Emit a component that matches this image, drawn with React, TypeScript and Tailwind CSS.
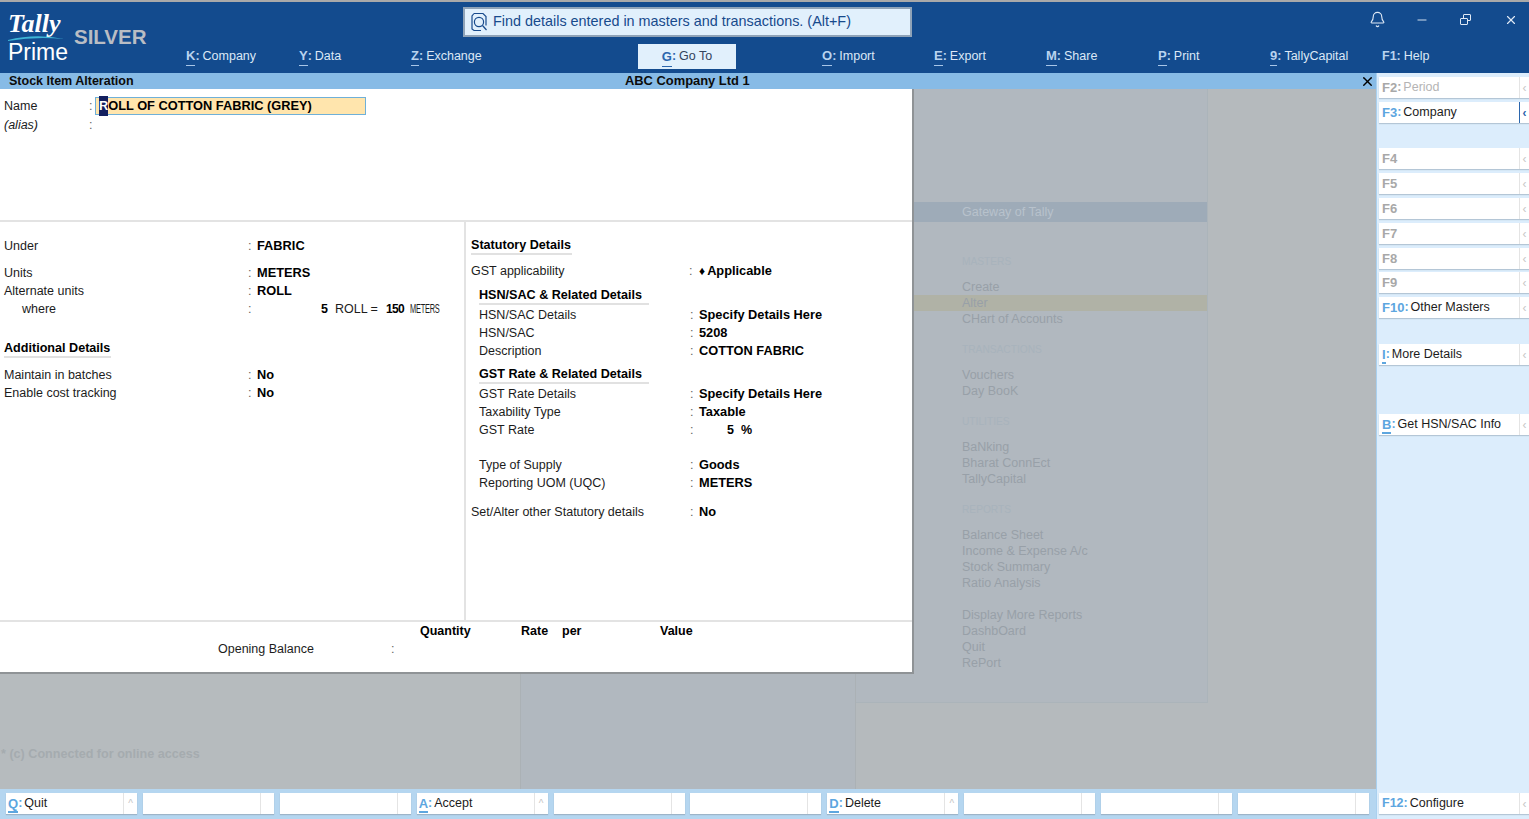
import React from 'react';
import { Bell, Minus, X } from 'lucide-react';

const sans = "font-['Liberation_Sans',Arial,sans-serif]";

const topLeft = [
  { k: 'K', label: 'Company', w: 'w-[113px]' },
  { k: 'Y', label: 'Data', w: 'w-[112px]' },
  { k: 'Z', label: 'Exchange', w: 'w-[227px]' },
];
const topRight = [
  { k: 'O', label: 'Import', w: 'w-[112px]' },
  { k: 'E', label: 'Export', w: 'w-[112px]' },
  { k: 'M', label: 'Share', w: 'w-[112px]' },
  { k: 'P', label: 'Print', w: 'w-[112px]' },
  { k: '9', label: 'TallyCapital', w: 'w-[112px]' },
];

const sideButtons = [
  { k: 'F2', label: 'Period', dim: true, top: 'mt-[4px]', active: false, under: false },
  { k: 'F3', label: 'Company', dim: false, top: 'mt-[4px]', active: true, under: false },
  { k: 'F4', label: '', dim: true, top: 'mt-[25px]', active: false, under: false },
  { k: 'F5', label: '', dim: true, top: 'mt-[4px]', active: false, under: false },
  { k: 'F6', label: '', dim: true, top: 'mt-[4px]', active: false, under: false },
  { k: 'F7', label: '', dim: true, top: 'mt-[4px]', active: false, under: false },
  { k: 'F8', label: '', dim: true, top: 'mt-[4px]', active: false, under: false },
  { k: 'F9', label: '', dim: true, top: 'mt-[3px]', active: false, under: false },
  { k: 'F10', label: 'Other Masters', dim: false, top: 'mt-[4px]', active: false, under: false },
  { k: 'I', label: 'More Details', dim: false, top: 'mt-[26px]', active: false, under: true },
  { k: 'B', label: 'Get HSN/SAC Info', dim: false, top: 'mt-[49px]', active: false, under: true },
];

const bottomButtons = [
  { k: 'Q', label: 'Quit' },
  { k: '', label: '' },
  { k: '', label: '' },
  { k: 'A', label: 'Accept' },
  { k: '', label: '' },
  { k: '', label: '' },
  { k: 'D', label: 'Delete' },
  { k: '', label: '' },
  { k: '', label: '' },
  { k: '', label: '' },
];

const ghostMenu = [
  { t: 'MASTERS', head: true, mt: 'mt-[32px]' },
  { t: 'Create', mt: 'mt-[9px]' },
  { t: 'Alter', hl: true },
  { t: 'CHart of Accounts' },
  { t: 'TRANSACTIONS', head: true, mt: 'mt-[15px]' },
  { t: 'Vouchers', mt: 'mt-[9px]' },
  { t: 'Day BooK' },
  { t: 'UTILITIES', head: true, mt: 'mt-[15px]' },
  { t: 'BaNking', mt: 'mt-[9px]' },
  { t: 'Bharat ConnEct' },
  { t: 'TallyCapital' },
  { t: 'REPORTS', head: true, mt: 'mt-[15px]' },
  { t: 'Balance Sheet', mt: 'mt-[9px]' },
  { t: 'Income & Expense A/c' },
  { t: 'Stock Summary' },
  { t: 'Ratio Analysis' },
  { t: 'Display More Reports', mt: 'mt-[16px]' },
  { t: 'DashbOard' },
  { t: 'Quit' },
  { t: 'RePort' },
];

const Row = ({ label, value, labelW, children }: { label: string; value?: string; labelW: string; children?: React.ReactNode }) => (
  <div className="flex h-[18px] items-center text-[12.5px] whitespace-nowrap text-[#1c1c1c]">
    <span className={`${labelW} shrink-0`}>{label}</span>
    <span className="w-[9px] shrink-0 text-[#666]">:</span>
    {value && <span className="text-[12.8px] font-bold text-black">{value}</span>}
    {children}
  </div>
);

const Heading = ({ text, w, mt = '' }: { text: string; w: string; mt?: string }) => (
  <div className={`${w} ${mt} h-[18px] border-b-2 border-[#e1e1e1] text-[12.6px] leading-[17px] font-bold whitespace-nowrap text-black`}>{text}</div>
);

const App = () => {
  return (
    <div className={`${sans} flex h-[819px] w-[1529px] flex-col overflow-hidden bg-[#b5babd]`}>
      <div className="h-[2px] bg-[#a9a9a9]" />

      {/* top bar */}
      <header className="flex h-[71px] shrink-0 bg-[#134b8e]">
        <div className="flex h-full w-[186px] shrink-0 pl-[8px]">
          <div className="w-[66px] shrink-0">
            <div className="mt-[10px] h-[24px] font-['Liberation_Serif',serif] text-[26px] leading-[24px] font-bold text-white italic">Tally</div>
            <svg width="58" height="8" viewBox="0 0 58 8" className="-mt-[2px] block">
              <path d="M0 6 Q 28 -1 56 5 Q 28 2 0 7 Z" fill="#3fb6d6" />
            </svg>
            <div className="-mt-[1px] text-[23px] leading-[22px] text-white">Prime</div>
          </div>
          <div className="mt-[23px] text-[20.5px] leading-[24px] font-bold text-[#b9bdc4]">SILVER</div>
        </div>
        <div className="flex min-w-0 flex-1 flex-col">
          <div className="flex h-[35px] items-start">
            <div className="mt-[5px] ml-[277px] flex h-[30px] w-[449px] items-center border-2 border-[#8fa3b8] bg-[#e1f0fc] pl-[5px] text-[14.4px] text-[#174a8c]">
              <span className="flex h-[20px] w-[22px] items-center">
                <svg width="18" height="20" viewBox="0 0 18 20" fill="none" stroke="#174a8c" strokeWidth="1.2">
                  <path d="M4 1.5h9l3 3v9M4 1.5 2 4v13l2 1.5h7" />
                  <circle cx="9" cy="10" r="4.6" />
                  <path d="m12.5 13.5 4 4.5" />
                </svg>
              </span>
              <span className="ml-[1px]">Find details entered in masters and transactions. (Alt+F)</span>
            </div>
            <div className="ml-auto flex h-[35px] items-center text-[#dfe9f5]">
              <Bell className="h-[17px] w-[17px]" strokeWidth={1.6} />
              <Minus className="ml-[29px] h-[14px] w-[14px]" strokeWidth={1.6} />
              <span className="relative ml-[31px] block h-[11px] w-[11px]">
                <span className="absolute top-0 right-0 h-[7px] w-[8px] rounded-[1px] border border-[#dfe9f5]" />
                <span className="absolute bottom-0 left-0 h-[7px] w-[8px] rounded-[1px] border border-[#dfe9f5] bg-[#134b8e]" />
              </span>
              <X className="mr-[11px] ml-[33px] h-[14px] w-[14px]" strokeWidth={2} />
            </div>
          </div>
          <nav className="flex h-[36px] items-start text-[12.5px] text-[#dce8f6]">
            {topLeft.map(item => (
              <div key={item.k} className={`${item.w} flex h-[32px] items-center pt-[8px]`}>
                <span className="border-b border-[#a8c6e8] pb-[2px] text-[13px] leading-[15px] font-bold text-[#b9d3ef]">{item.k}</span>
                <span className="mr-[3px] -mt-[2px] font-bold text-[#b9d3ef]">:</span>
                <span className="-mt-[2px]">{item.label}</span>
              </div>
            ))}
            <div className="mt-[7px] flex h-[25px] w-[98px] items-center justify-center bg-[#e1f0fc] text-[#33435c]">
              <span className="mt-[2px] border-b border-[#2b66ad] pb-[2px] text-[13px] leading-[15px] font-bold text-[#2b66ad]">G</span>
              <span className="mr-[3px] font-bold text-[#2b66ad]">:</span>
              Go To
            </div>
            <div className="w-[86px] shrink-0" />
            {topRight.map(item => (
              <div key={item.k} className={`${item.w} flex h-[32px] items-center pt-[8px]`}>
                <span className="border-b border-[#a8c6e8] pb-[2px] text-[13px] leading-[15px] font-bold text-[#b9d3ef]">{item.k}</span>
                <span className="mr-[3px] -mt-[2px] font-bold text-[#b9d3ef]">:</span>
                <span className="-mt-[2px]">{item.label}</span>
              </div>
            ))}
            <div className="flex h-[32px] items-center pt-[6px] whitespace-nowrap">
              <span className="font-bold text-[#b9d3ef]">F1:</span>
              <span className="ml-[3px]">Help</span>
            </div>
          </nav>
        </div>
      </header>

      <div className="flex min-h-0 flex-1">
        <div className="flex w-[1376px] shrink-0 flex-col">
          {/* title bar */}
          <div className="flex h-[16px] shrink-0 items-center bg-[#87bbe6] font-bold text-[#0b0b0b]">
            <span className="w-[625px] shrink-0 pl-[9px] text-[12.5px]">Stock Item Alteration</span>
            <span className="text-[12.9px]">ABC Company Ltd 1</span>
            <X className="mr-[1px] ml-auto h-[15px] w-[15px] text-black" strokeWidth={2.2} />
          </div>

          {/* canvas with the dimmed Gateway behind the form */}
          <div className="relative flex min-h-0 flex-1">
            <div className="flex h-[700px] w-full">
              <div className="w-[521px] shrink-0 border-r border-[#abb1b5] bg-[#b6bbbe]">
                <div className="mt-[656px] pl-[1px] text-[12.6px] font-bold text-[#a5abaf]">* (c) Connected for online access</div>
              </div>
              <div className="w-[335px] shrink-0 border-r border-[#abb1b5] bg-[#b1b8bf]" />
              <div className="h-[614px] w-[352px] shrink-0 border-r border-b border-[#abb4ba] bg-[#b1b8bf] pt-[113px]">
                <div className="flex h-[20px] items-center bg-[#9eabb8] pl-[106px] text-[12.5px] text-[#b8c2cc]">Gateway of Tally</div>
                {ghostMenu.map(item => (
                  <div
                    key={item.t}
                    className={`${item.mt ?? ''} ${item.hl ? 'bg-[#b0b2a6]' : ''} flex h-[16px] items-center pl-[106px] ${item.head ? 'text-[10.2px] text-[#a8b3bc]' : 'text-[12.5px] text-[#98a0a8]'}`}
                  >
                    {item.t}
                  </div>
                ))}
              </div>
            </div>

            {/* form sits over the dimmed screen */}
            <div className="absolute top-0 left-0 flex h-[585px] w-[914px] flex-col border-r-2 border-b-2 border-[#8f9396] bg-white">
              <div className="h-[133px] shrink-0 border-b-2 border-[#e3e3e3] pt-[8px] pl-[4px]">
                <div className="flex h-[18px] items-center text-[12.5px] text-[#1c1c1c]">
                  <span className="w-[85px] shrink-0">Name</span>
                  <span className="w-[6px] shrink-0 text-[#666]">:</span>
                  <div className="flex h-[18px] w-[271px] items-center border border-[#6fb0d8] bg-[#ffe5ad] pl-[3px] text-[12.8px] font-bold text-black">
                    <span className="bg-[#14205f] text-white">R</span>OLL OF COTTON FABRIC (GREY)
                  </div>
                </div>
                <div className="mt-[1px] flex h-[18px] items-center text-[12.5px] text-[#1c1c1c]">
                  <span className="w-[85px] shrink-0 italic">(alias)</span>
                  <span className="text-[#666]">:</span>
                </div>
              </div>

              <div className="flex min-h-0 flex-1">
                <div className="w-[466px] shrink-0 border-r-2 border-[#e3e3e3] pt-[15px] pl-[4px]">
                  <Row label="Under" value="FABRIC" labelW="w-[244px]" />
                  <div className="mt-[9px]">
                    <Row label="Units" value="METERS" labelW="w-[244px]" />
                    <Row label="Alternate units" value="ROLL" labelW="w-[244px]" />
                    <div className="flex h-[18px] items-center text-[12.5px] whitespace-nowrap text-[#1c1c1c]">
                      <span className="w-[244px] shrink-0 pl-[18px]">where</span>
                      <span className="w-[73px] shrink-0 text-[#666]">:</span>
                      <span className="font-bold text-black">5</span>
                      <span className="ml-[7px]">ROLL =</span>
                      <span className="ml-[8px] text-[12px] font-bold tracking-[-0.6px] text-black">150</span>
                      <span className="ml-[6px] inline-block origin-left scale-x-[0.62] text-[12px] tracking-[-0.4px]">METERS</span>
                    </div>
                  </div>
                  <Heading text="Additional Details" w="w-[107px]" mt="mt-[22px]" />
                  <div className="mt-[8px]">
                    <Row label="Maintain in batches" value="No" labelW="w-[244px]" />
                    <Row label="Enable cost tracking" value="No" labelW="w-[244px]" />
                  </div>
                </div>

                <div className="min-w-0 flex-1 pt-[15px] pl-[5px]">
                  <Heading text="Statutory Details" w="w-[101px]" />
                  <div className="mt-[7px]">
                    <Row label="GST applicability" labelW="w-[218px]">
                      <span className="mr-[2px] ml-[1px] text-[12px] leading-[12px] text-black">♦</span>
                      <span className="text-[12.8px] font-bold text-black">Applicable</span>
                    </Row>
                  </div>
                  <div className="mt-[7px] pl-[8px]">
                    <Heading text="HSN/SAC & Related Details" w="w-[170px]" />
                    <div className="mt-[1px]">
                      <Row label="HSN/SAC Details" value="Specify Details Here" labelW="w-[211px]" />
                      <Row label="HSN/SAC" value="5208" labelW="w-[211px]" />
                      <Row label="Description" value="COTTON FABRIC" labelW="w-[211px]" />
                    </div>
                    <Heading text="GST Rate & Related Details" w="w-[170px]" mt="mt-[6px]" />
                    <div className="mt-[1px]">
                      <Row label="GST Rate Details" value="Specify Details Here" labelW="w-[211px]" />
                      <Row label="Taxability Type" value="Taxable" labelW="w-[211px]" />
                      <Row label="GST Rate" labelW="w-[211px]">
                        <span className="ml-[28px] font-bold text-black">5</span>
                        <span className="ml-[7px] font-bold text-black">%</span>
                      </Row>
                    </div>
                    <div className="mt-[17px]">
                      <Row label="Type of Supply" value="Goods" labelW="w-[211px]" />
                      <Row label="Reporting UOM (UQC)" value="METERS" labelW="w-[211px]" />
                    </div>
                  </div>
                  <div className="mt-[11px]">
                    <Row label="Set/Alter other Statutory details" value="No" labelW="w-[219px]" />
                  </div>
                </div>
              </div>

              <div className="h-[52px] shrink-0 border-t-2 border-[#e3e3e3] text-[12.5px]">
                <div className="flex h-[18px] items-center font-bold text-black">
                  <span className="w-[420px] shrink-0" />
                  <span className="w-[101px] shrink-0">Quantity</span>
                  <span className="w-[41px] shrink-0">Rate</span>
                  <span className="w-[98px] shrink-0">per</span>
                  <span>Value</span>
                </div>
                <div className="flex h-[18px] items-center text-[#1c1c1c]">
                  <span className="w-[218px] shrink-0" />
                  <span className="w-[173px] shrink-0">Opening Balance</span>
                  <span className="text-[#666]">:</span>
                </div>
              </div>
            </div>
          </div>

          {/* bottom keys */}
          <div className="flex h-[30px] shrink-0 gap-[5.9px] bg-[#b5d6f0] pt-[4px] pl-[6px]">
            {bottomButtons.map((b, i) => (
              <div key={i} className="flex h-[21px] w-[131px] shrink-0 bg-white text-[12.5px] text-[#1c1c1c] shadow-[0_1px_1px_#9db4c8]">
                <div className="flex min-w-0 flex-1 items-center pl-[2px]">
                  {b.k && (
                    <>
                      <span className="mt-[3px] border-b-2 border-[#5da6df] text-[13px] leading-[14px] font-bold text-[#5da6df]">{b.k}</span>
                      <span className="mr-[2px] font-bold text-[#5da6df]">:</span>
                      {b.label}
                    </>
                  )}
                </div>
                <div className="flex w-[14px] shrink-0 items-center justify-center border-l border-[#e4e4e4] text-[10px] text-[#c4c4c4]">{b.k ? '^' : ''}</div>
              </div>
            ))}
          </div>
        </div>

        {/* right keys */}
        <aside className="flex w-[153px] shrink-0 flex-col border-l border-[#a9d0ef] bg-[#dcedfc] pl-[2px]">
          {sideButtons.map(b => (
            <div key={b.k} className={`${b.top} flex h-[21px] shrink-0 bg-white text-[12.5px] shadow-[0_1px_1px_#b4c6d6]`}>
              <div className="flex min-w-0 flex-1 items-center pl-[3px] whitespace-nowrap">
                <span className={`text-[13px] font-bold ${b.dim ? 'text-[#a8a8a8]' : 'text-[#5da6df]'} ${b.under ? 'mt-[3px] border-b-2 border-[#5da6df] leading-[14px]' : ''}`}>{b.k}</span>
                {b.label && <span className={`mr-[2px] font-bold ${b.dim ? 'text-[#a8a8a8]' : 'text-[#5da6df]'}`}>:</span>}
                <span className={b.dim ? 'text-[#b4b4b4]' : 'text-[#1c1c1c]'}>{b.label}</span>
              </div>
              <div className={`flex w-[10px] shrink-0 items-center justify-center text-[12px] ${b.active ? 'border-l border-[#2b66ad] font-bold text-[#2b66ad]' : 'border-l border-[#e4e4e4] text-[#c8c8c8]'}`}>‹</div>
            </div>
          ))}
          <div className="mt-auto mb-[5px] flex h-[21px] shrink-0 bg-white text-[12.5px] shadow-[0_1px_1px_#b4c6d6]">
            <div className="flex min-w-0 flex-1 items-center pl-[3px]">
              <span className="mr-[2px] font-bold text-[#5da6df]">F12:</span>
              <span className="text-[#1c1c1c]">Configure</span>
            </div>
            <div className="flex w-[10px] shrink-0 items-center justify-center border-l border-[#e4e4e4] text-[12px] text-[#c8c8c8]">‹</div>
          </div>
        </aside>
      </div>
    </div>
  );
};

export default App;
